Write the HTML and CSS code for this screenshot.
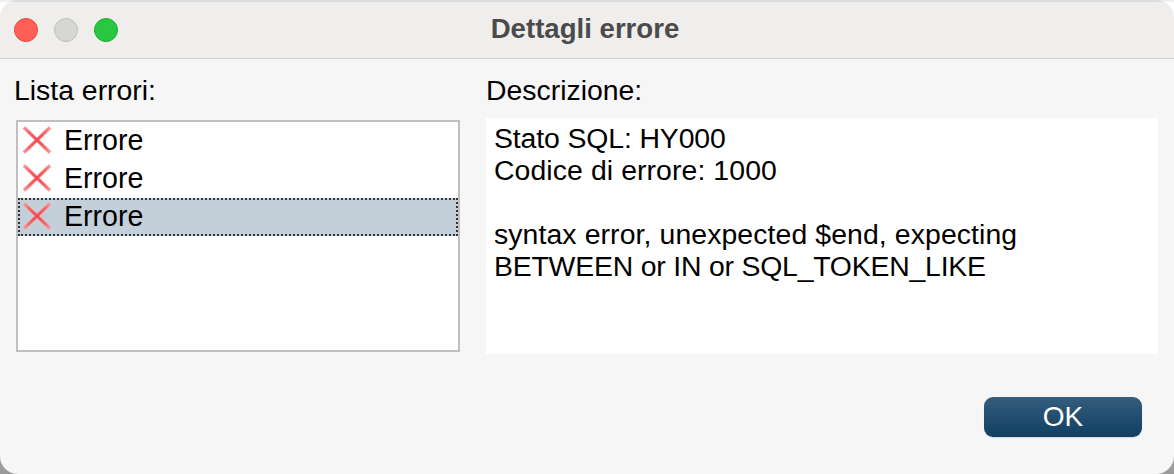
FILE: index.html
```html
<!DOCTYPE html>
<html lang="it">
<head>
<meta charset="utf-8">
<title>Dettagli errore</title>
<link rel="stylesheet" href="styles.css">
</head>
<body>
<svg class="defs" width="0" height="0" aria-hidden="true">
  <defs>
    <radialGradient id="xfade" gradientUnits="userSpaceOnUse" cx="16" cy="14" r="19">
      <stop offset="0" stop-color="#f4474b"/>
      <stop offset="0.6" stop-color="#f5686c"/>
      <stop offset="1" stop-color="#f8a0a2"/>
    </radialGradient>
    <symbol id="cross" viewBox="0 0 32 30">
      <path class="x-halo" d="M3 1.5L29 26.5M29 1.5L3 26.5"/>
      <path class="x-core" d="M3 1.5L29 26.5M29 1.5L3 26.5"/>
    </symbol>
  </defs>
</svg>
<div class="window">
  <header class="titlebar">
    <div class="lights">
      <span class="light red"></span>
      <span class="light grey"></span>
      <span class="light green"></span>
    </div>
    <h1 class="title">Dettagli errore</h1>
  </header>
  <main class="content">
    <div class="panes">
      <section class="pane-left">
        <div class="label">Lista errori:</div>
        <ul class="list">
          <li class="row"><svg class="x"><use href="#cross"/></svg><span class="row-text">Errore</span></li>
          <li class="row"><svg class="x"><use href="#cross"/></svg><span class="row-text">Errore</span></li>
          <li class="row selected"><svg class="x"><use href="#cross"/></svg><span class="row-text">Errore</span></li>
        </ul>
      </section>
      <section class="pane-right">
        <div class="label">Descrizione:</div>
        <div class="description">
          <div class="line-state">Stato SQL: HY000</div>
          <div class="line-code">Codice di errore: 1000</div>
          <div class="blank"></div>
          <div class="line-syntax">syntax error, unexpected $end, expecting</div>
          <div class="line-tokens">BETWEEN or IN or SQL_TOKEN_LIKE</div>
        </div>
      </section>
    </div>
    <div class="actions"><button class="ok" type="button">OK</button></div>
  </main>
</div>
</body>
</html>
```
FILE: styles.css
```css
* { box-sizing: border-box; }
html, body { margin: 0; height: 100%; }
body {
  background: linear-gradient(#e9e9e9 0, #fff 3px, #fff 50%, #9a9a9a 100%);
  font-family: "Liberation Sans", Arial, sans-serif;
  color: #000;
  overflow: hidden;
}
.defs { display: block; height: 0; }
.window {
  height: 474px;
  background: #f6f6f6;
  border-radius: 18px;
  overflow: hidden;
  display: flex;
  flex-direction: column;
}
.titlebar {
  height: 59px;
  flex: none;
  background: #efeeec;
  border-top: 2px solid #dcdcdc;
  border-bottom: 1px solid #d0d0d0;
  display: flex;
  align-items: center;
  justify-content: center;
  position: relative;
}
.lights {
  position: absolute;
  left: 14px;
  top: 16px;
  display: flex;
  gap: 16px;
}
.light {
  width: 24px;
  height: 24px;
  border-radius: 50%;
  border: 1px solid;
}
.red { background: #ff5f57; border-color: #e5483f; }
.grey { background: #d6d6d4; border-color: #bdbdbb; }
.green { background: #28c840; border-color: #1fae34; }
.title {
  margin: 0 4px 0 0;
  font-size: 27.6px;
  font-weight: bold;
  color: #4b4b4b;
  line-height: 30px;
  position: relative;
  top: -1px;
}
.content {
  flex: 1;
  padding: 0 16px;
  display: flex;
  flex-direction: column;
}
.panes {
  display: flex;
  gap: 26px;
  padding-top: 16px;
}
.pane-left { width: 444px; flex: none; }
.pane-right { flex: 1; }
.label {
  font-size: 28.4px;
  line-height: 30px;
  height: 30px;
}
.pane-left .label { margin-left: -2px; }
.list {
  list-style: none;
  margin: 15px 0 0;
  padding: 0;
  height: 232px;
  background: #fff;
  border: 2px solid #bfbfbf;
}
.row {
  height: 38px;
  padding-left: 3px;
  display: flex;
  align-items: center;
  gap: 11px;
  font-size: 28.6px;
  line-height: 36px;
}
.row-text { margin-top: -2px; }
.row.selected {
  background: #c3d0d9;
  outline: 2px dotted #333;
  outline-offset: -2px;
}
.x { width: 32px; height: 30px; flex: none; }
.x-halo { stroke: #f8a0a2; stroke-width: 4.2; stroke-opacity: 0.55; fill: none; }
.x-core { stroke: url(#xfade); stroke-width: 2.8; fill: none; }
.description {
  margin-top: 13px;
  height: 236px;
  background: #fff;
  padding: 4px 8px;
  font-size: 28.4px;
  line-height: 32px;
}
.line-state { letter-spacing: -0.12px; }
.line-code { letter-spacing: 0.09px; }
.line-syntax { letter-spacing: 0.1px; }
.line-tokens { letter-spacing: -0.2px; }
.blank { height: 32px; }
.actions {
  display: flex;
  justify-content: flex-end;
  padding: 43px 16px 0 0;
}
.ok {
  width: 158px;
  height: 40px;
  border: 0;
  border-radius: 9px;
  background: linear-gradient(#355d7d, #0f3f63);
  box-shadow: 0 1px 1px rgba(0, 0, 0, 0.12);
  color: #fff;
  font-family: inherit;
  font-size: 28px;
  padding: 0;
}
```
